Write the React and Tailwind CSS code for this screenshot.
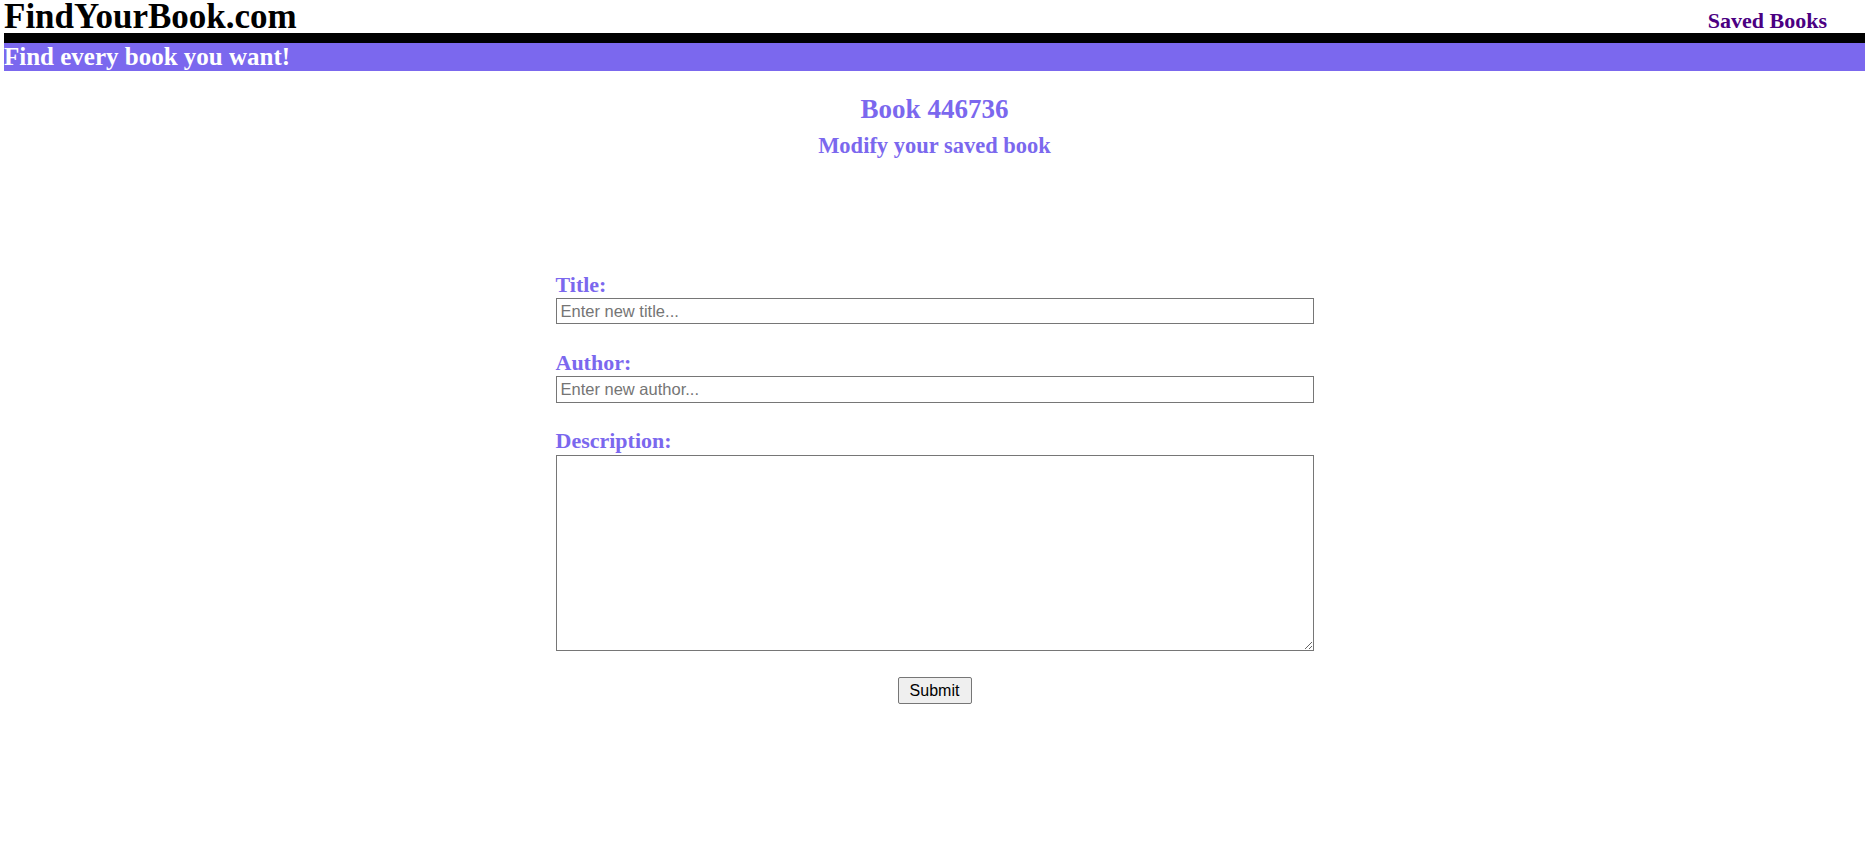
export default function App() {
  const serif = { fontFamily: '"Liberation Serif", "Times New Roman", serif' };
  const sans = { fontFamily: '"Liberation Sans", Arial, sans-serif' };
  return (
    <div className="min-h-[857px] bg-white pl-[4px] pr-[11px]" style={serif}>
      <header className="flex h-[33px] items-baseline justify-between overflow-visible">
        <h1 className="text-[35px] font-bold leading-[34px] text-black">FindYourBook.com</h1>
        <a className="mr-[38px] text-[22px] font-bold leading-[34px] text-[#4b0082]" href="#">
          Saved Books
        </a>
      </header>
      <div className="h-[10px] bg-black" />
      <div className="h-[28px] bg-[#7b68ee] text-[25px] font-bold leading-[28px] text-white">
        Find every book you want!
      </div>
      <main className="flex flex-col items-center">
        <h2 className="mt-[23px] text-[27px] font-bold leading-[31px] text-[#7b68ee]">Book 446736</h2>
        <h3 className="mt-[8px] text-[22.5px] font-bold leading-[26px] text-[#7b68ee]">Modify your saved book</h3>
        <form className="mt-[113px] flex w-[758px] flex-col" onSubmit={(e) => e.preventDefault()}>
          <label className="text-[22px] font-bold leading-[25px] text-[#7b68ee]">Title:</label>
          <input
            className="mt-[1px] h-[26px] border border-[#767676] px-[4px] text-[16.5px] text-black placeholder:text-[#757575]"
            style={sans}
            placeholder="Enter new title..."
          />
          <label className="mt-[26px] text-[22px] font-bold leading-[25px] text-[#7b68ee]">Author:</label>
          <input
            className="mt-[1px] h-[27px] border border-[#767676] px-[4px] text-[16.5px] text-black placeholder:text-[#757575]"
            style={sans}
            placeholder="Enter new author..."
          />
          <label className="mt-[25px] text-[22px] font-bold leading-[25px] text-[#7b68ee]">Description:</label>
          <textarea
            className="mt-[2px] h-[196px] resize border border-[#767676] px-[4px] text-[16px]"
            style={sans}
          />
          <div className="mt-[26px] flex justify-center">
            <button
              type="submit"
              className="h-[27px] w-[74px] rounded-[2px] border border-[#767676] bg-[#efefef] text-[16px] text-black"
              style={sans}
            >
              Submit
            </button>
          </div>
        </form>
      </main>
    </div>
  );
}
